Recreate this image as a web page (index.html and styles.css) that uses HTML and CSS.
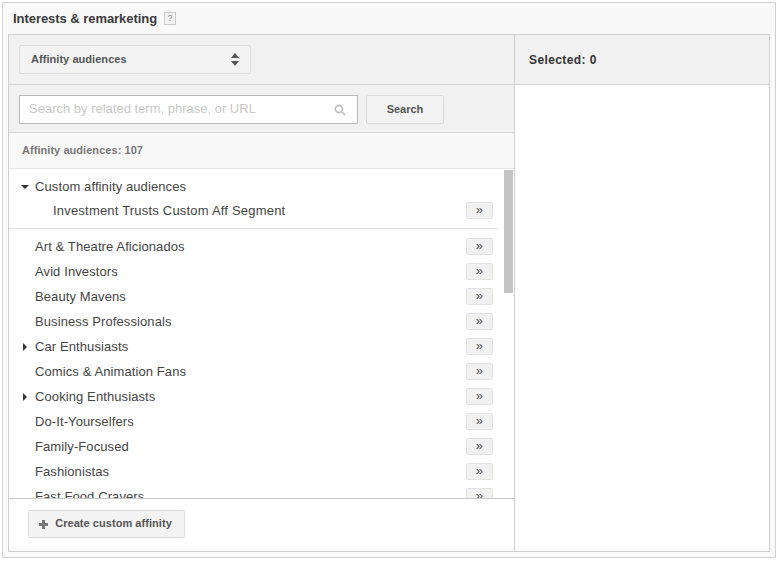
FILE: index.html
```html
<!DOCTYPE html>
<html lang="en">
<head>
  <meta charset="UTF-8">
  <title>Interests &amp; remarketing</title>
  <link rel="stylesheet" href="styles.css">
</head>
<body>
  <div class="panel">
    <div class="panel-title">
      <span>Interests &amp; remarketing</span>
      <span class="help">?</span>
    </div>

    <div class="picker">
      <div class="picker-left">
        <!-- Audience type dropdown -->
        <div class="type-row">
          <div class="type-select">
            <span class="nudge-up">Affinity audiences</span>
            <svg class="updown" width="8" height="13" viewBox="0 0 8 13"><path d="M4 0 8 5H0zM0 8h8l-4 5z"/></svg>
          </div>
        </div>

        <!-- Search -->
        <div class="search-row">
          <div class="search-box">
            <span class="placeholder">Search by related term, phrase, or URL</span>
            <svg class="lens" width="12" height="12" viewBox="0 0 12 12"><circle cx="5" cy="5" r="3.6"/><path d="M7.7 7.7 11 11"/></svg>
          </div>
          <div class="btn search-btn"><span class="nudge-up">Search</span></div>
        </div>

        <div class="count-row"><span class="nudge-up">Affinity audiences: 107</span></div>

        <!-- Audience list -->
        <div class="list">
          <div class="list-scroll">
            <div class="group">
              <div class="row row-first"><span class="arrow arrow-down"></span>Custom affinity audiences</div>
              <div class="row row-child">Investment Trusts Custom Aff Segment<span class="add">»</span></div>
            </div>
            <div class="row">Art &amp; Theatre Aficionados<span class="add">»</span></div>
            <div class="row">Avid Investors<span class="add">»</span></div>
            <div class="row">Beauty Mavens<span class="add">»</span></div>
            <div class="row">Business Professionals<span class="add">»</span></div>
            <div class="row"><span class="arrow arrow-right"></span>Car Enthusiasts<span class="add">»</span></div>
            <div class="row">Comics &amp; Animation Fans<span class="add">»</span></div>
            <div class="row"><span class="arrow arrow-right"></span>Cooking Enthusiasts<span class="add">»</span></div>
            <div class="row">Do-It-Yourselfers<span class="add">»</span></div>
            <div class="row">Family-Focused<span class="add">»</span></div>
            <div class="row">Fashionistas<span class="add">»</span></div>
            <div class="row">Fast Food Cravers<span class="add">»</span></div>
          </div>
          <div class="scrollbar"></div>
        </div>

        <div class="list-footer">
          <div class="btn create-btn">
            <svg class="plus" width="9" height="9" viewBox="0 0 9 9"><path d="M3 0h3v3h3v3H6v3H3V6H0V3h3z"/></svg>
            <span class="nudge-up">Create custom affinity</span>
          </div>
        </div>
      </div>

      <div class="picker-right">
        <div class="selected-head">Selected: 0</div>
      </div>
    </div>
  </div>
</body>
</html>
```

FILE: styles.css
```css
html, body {
  margin: 0;
  height: 100%;
  background-color: #fff;
}

body {
  padding: 2px 0 0 2px;
  box-sizing: border-box;
  font-family: "Liberation Sans", Arial, sans-serif;
  font-size: 13px;
  color: #444;
}

.panel {
  box-sizing: border-box;
  width: 774px;
  height: 556px;
  padding: 0 5px 5px;
  background-color: #f9f9f9;
  border: 1px solid #d0d0d0;
  display: flex;
  flex-direction: column;
}

.panel-title {
  height: 31px;
  flex: none;
  display: flex;
  align-items: center;
  gap: 7px;
  padding-left: 5px;
  font-weight: bold;
  letter-spacing: -0.05px;
  color: #3a3a3a;
}

.help {
  width: 10px;
  height: 11px;
  line-height: 11px;
  border: 1px solid #ccc;
  background-color: #f1f1f1;
  color: #888;
  font-size: 9px;
  font-weight: normal;
  text-align: center;
}

.picker {
  flex: 1;
  display: flex;
  background-color: #fff;
  border: 1px solid #cfcfcf;
  min-height: 0;
}

.picker-left {
  box-sizing: border-box;
  width: 506px;
  flex: none;
  border-right: 1px solid #cfcfcf;
  display: flex;
  flex-direction: column;
}

.picker-right {
  flex: 1;
}

/* the label text sits a pixel above centre in these controls */
.nudge-up {
  padding-bottom: 2px;
}

.type-row {
  box-sizing: border-box;
  height: 50px;
  padding: 10px;
  background-color: #f1f1f1;
  border-bottom: 1px solid #d4d4d4;
}

.type-select {
  box-sizing: border-box;
  width: 232px;
  height: 29px;
  padding: 0 11px;
  display: flex;
  align-items: center;
  justify-content: space-between;
  background-color: #f3f3f3;
  border: 1px solid #dcdcdc;
  border-radius: 2px;
  font-size: 11px;
  font-weight: bold;
  letter-spacing: 0.05px;
  color: #555;
}

.updown {
  fill: #555;
}

.search-row {
  box-sizing: border-box;
  height: 48px;
  padding: 10px;
  display: flex;
  gap: 8px;
  background-color: #f1f1f1;
  border-bottom: 1px solid #d4d4d4;
}

.search-box {
  box-sizing: border-box;
  width: 339px;
  height: 29px;
  padding: 0 11px 0 9px;
  display: flex;
  align-items: center;
  justify-content: space-between;
  background-color: #fff;
  border: 1px solid #b9b9b9;
}

.placeholder {
  font-size: 13px;
  padding-bottom: 2px;
  color: #c8c8c8;
}

.lens {
  fill: none;
  stroke: #bbb;
  stroke-width: 1.6;
}

.btn {
  box-sizing: border-box;
  display: flex;
  align-items: center;
  justify-content: center;
  background-color: #f3f3f3;
  border: 1px solid #dcdcdc;
  border-radius: 2px;
  font-size: 11px;
  font-weight: bold;
  color: #555;
}

.search-btn {
  width: 78px;
  height: 29px;
}

.count-row {
  box-sizing: border-box;
  height: 36px;
  padding-left: 13px;
  display: flex;
  align-items: center;
  background-color: #f9f9f9;
  border-bottom: 1px solid #e6e6e6;
  font-size: 11px;
  font-weight: bold;
  letter-spacing: 0.05px;
  color: #777;
}

.list {
  position: relative;
  flex: 1;
  min-height: 0;
  overflow: hidden;
}

.list-scroll {
  padding-top: 5px;
}

.group {
  margin-right: 16px;
  padding-bottom: 6px;
  margin-bottom: 5px;
  border-bottom: 1px solid #e2e2e2;
}

.row {
  position: relative;
  height: 25px;
  padding-left: 26px;
  padding-right: 21px;
  display: flex;
  align-items: center;
  justify-content: space-between;
  line-height: 25px;
  letter-spacing: 0.1px;
}

.group .row {
  padding-right: 5px;
  height: 24px;
}

.row-first {
  justify-content: flex-start;
}

.row-child {
  padding-left: 44px;
  letter-spacing: 0.2px;
}

.arrow {
  position: absolute;
  width: 0;
  height: 0;
  border-style: solid;
}

.arrow-down {
  left: 12px;
  top: 11px;
  border-width: 4px 4px 0;
  border-color: #333 transparent transparent;
}

.arrow-right {
  left: 14px;
  top: 9px;
  border-width: 4px 0 4px 4px;
  border-color: transparent transparent transparent #333;
}

.add {
  box-sizing: border-box;
  width: 27px;
  height: 17px;
  line-height: 14px;
  background-color: #f1f1f1;
  border: 1px solid #e2e2e2;
  border-radius: 2px;
  font-size: 13px;
  text-align: center;
  color: #555;
}

.scrollbar {
  position: absolute;
  right: 1px;
  top: 1px;
  width: 9px;
  height: 123px;
  background-color: #c4c4c4;
}

.list-footer {
  box-sizing: border-box;
  height: 53px;
  flex: none;
  padding: 11px 19px;
  background-color: #fff;
  border-top: 1px solid #c8c8c8;
}

.create-btn {
  width: 157px;
  height: 28px;
  gap: 7px;
  letter-spacing: 0.05px;
}

.plus {
  fill: #777;
  margin-left: -2px;
}

.selected-head {
  box-sizing: border-box;
  height: 50px;
  padding-left: 14px;
  display: flex;
  align-items: center;
  background-color: #f1f1f1;
  border-bottom: 1px solid #d4d4d4;
  font-size: 12px;
  font-weight: bold;
  letter-spacing: 0.4px;
  color: #333;
}
```
